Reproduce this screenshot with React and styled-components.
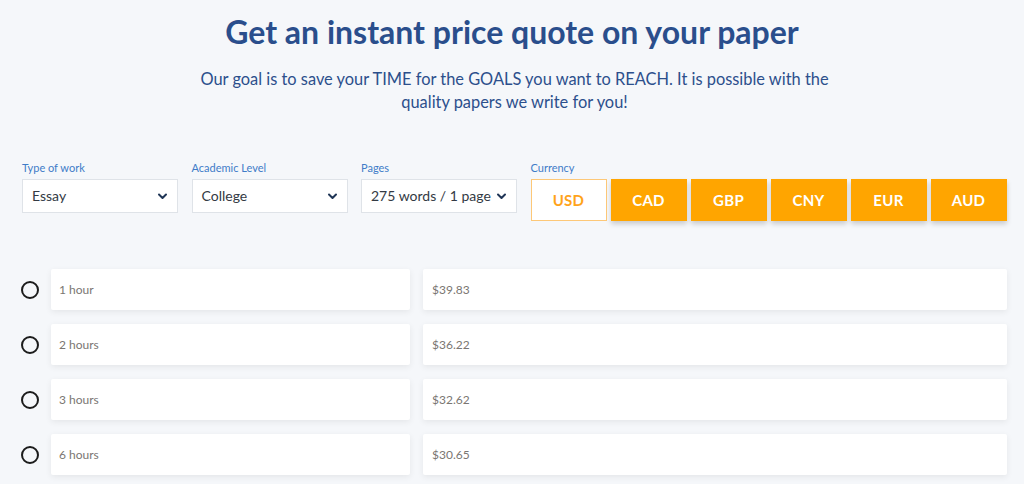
import React from "react";
import styled, { createGlobalStyle } from "styled-components";

const Global = createGlobalStyle`
  html, body { margin: 0; padding: 0; background: #f5f7fa; }
  body { font-family: "Lato", "Open Sans", sans-serif; }
  * { box-sizing: border-box; }
`;

const Page = styled.div`
  width: 1024px;
  height: 484px;
  overflow: hidden;
  background: #f5f7fa;
  padding: 12px 17px 0 22px;
`;

const Title = styled.h1`
  margin: 0 -17px 0 -22px;
  text-align: center;
  font-family: "Lato", sans-serif;
  font-weight: 700;
  font-size: 32px;
  line-height: 40px;
  color: #2a4e8c;
`;

const Subtitle = styled.p`
  margin: 15px auto 0;
  width: 680px;
  text-align: center;
  font-family: "Lato", sans-serif;
  font-size: 16.4px;
  line-height: 23px;
  color: #2c4f8c;
`;

const Form = styled.div`
  margin-top: 48px;
  display: grid;
  grid-template-columns: 156px 156px 156px 1fr;
  column-gap: 13.5px;
`;

const Field = styled.div`
  display: flex;
  flex-direction: column;
`;

const Label = styled.div`
  font-family: "Lato", sans-serif;
  font-size: 11px;
  line-height: 14px;
  color: #3f7cc8;
  margin-bottom: 4px;
`;

const Select = styled.div`
  height: 34px;
  background: #fff;
  border: 1px solid #dfe3e8;
  display: flex;
  align-items: center;
  justify-content: space-between;
  padding: 0 9px 1px 9px;
  font-family: "Lato", sans-serif;
  font-size: 14px;
  color: #333a44;
`;

const Chevron = () => (
  <svg width="11" height="8" viewBox="0 0 11 8">
    <path d="M2 2.5 L5.5 6 L9 2.5" fill="none" stroke="#1f3556" strokeWidth="2" strokeLinecap="round" strokeLinejoin="round" />
  </svg>
);

const Currencies = styled.div`
  display: flex;
  gap: 4px;
`;

const CurrencyButton = styled.div`
  width: 76px;
  height: 42px;
  display: flex;
  align-items: center;
  justify-content: center;
  font-family: "Lato", sans-serif;
  font-weight: 700;
  font-size: 15px;
  letter-spacing: 0.3px;
  background: ${(p) => (p.$active ? "#ffffff" : "#ffa500")};
  color: ${(p) => (p.$active ? "#ffa31a" : "#ffffff")};
  border: 1px solid ${(p) => (p.$active ? "#fdc878" : "#ffa500")};
  box-shadow: ${(p) => (p.$active ? "none" : "0 3px 5px rgba(0,0,0,0.18)")};
`;

const Rows = styled.div`
  margin-top: 48px;
  display: flex;
  flex-direction: column;
  gap: 14px;
`;

const Row = styled.div`
  display: flex;
  align-items: center;
`;

const Radio = styled.div`
  width: 18px;
  height: 18px;
  border-radius: 50%;
  border: 2px solid #1c1c1c;
  margin-left: -1px;
  margin-right: 12px;
  flex: none;
`;

const Cell = styled.div`
  height: 41px;
  background: #fff;
  display: flex;
  align-items: center;
  padding-left: ${(p) => p.$pad}px;
  font-family: "Lato", sans-serif;
  font-size: 12px;
  color: #7a7672;
  box-shadow: 0 2px 6px rgba(0, 0, 0, 0.07);
  border-radius: 2px;
  flex: ${(p) => (p.$grow ? "1" : "none")};
  width: ${(p) => (p.$w ? `${p.$w}px` : "auto")};
  margin-right: ${(p) => p.$mr || 0}px;
`;

const currencies = ["USD", "CAD", "GBP", "CNY", "EUR", "AUD"];
const rows = [
  ["1 hour", "$39.83"],
  ["2 hours", "$36.22"],
  ["3 hours", "$32.62"],
  ["6 hours", "$30.65"],
];

export default function App() {
  return (
    <>
      <Global />
      <Page>
        <Title>Get an instant price quote on your paper</Title>
        <Subtitle>
          Our goal is to save your TIME for the GOALS you want to REACH. It is possible with the quality papers we write for you!
        </Subtitle>
        <Form>
          <Field>
            <Label>Type of work</Label>
            <Select>Essay<Chevron /></Select>
          </Field>
          <Field>
            <Label>Academic Level</Label>
            <Select>College<Chevron /></Select>
          </Field>
          <Field>
            <Label>Pages</Label>
            <Select>275 words / 1 page<Chevron /></Select>
          </Field>
          <Field>
            <Label>Currency</Label>
            <Currencies>
              {currencies.map((c, i) => (
                <CurrencyButton key={c} $active={i === 0}>{c}</CurrencyButton>
              ))}
            </Currencies>
          </Field>
        </Form>
        <Rows>
          {rows.map(([t, p]) => (
            <Row key={t}>
              <Radio />
              <Cell $w={359} $mr={13} $pad={8}>{t}</Cell>
              <Cell $grow $pad={9}>{p}</Cell>
            </Row>
          ))}
        </Rows>
      </Page>
    </>
  );
}
